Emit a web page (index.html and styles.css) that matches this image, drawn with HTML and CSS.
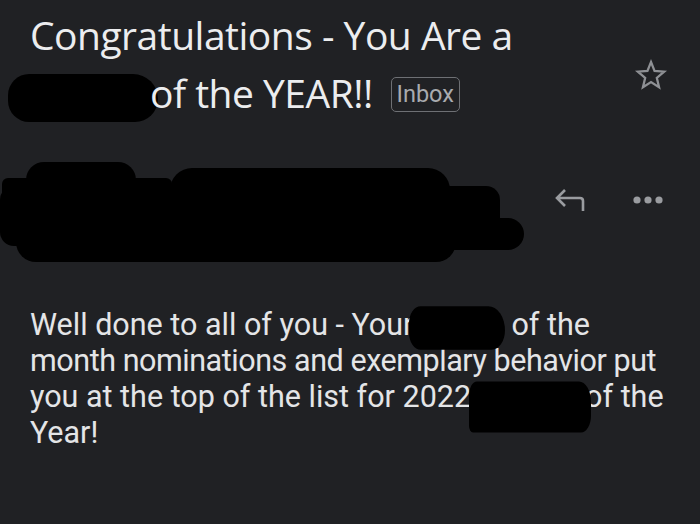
FILE: index.html
```html
<!DOCTYPE html>
<html>
<head>
<meta charset="utf-8">
<link rel="stylesheet" href="styles.css">
</head>
<body>
<div class="screen">
  <header class="subject-row">
    <h1 class="subject">Congratulations - You Are a<br><span class="redact r-title"></span>of the YEAR!! <span class="badge">Inbox</span></h1>
    <button class="icon-btn star" aria-label="Star">
      <svg width="34" height="34" viewBox="0 0 24 24"><path d="M12 2.8l2.5 6.3 6.8.5-5.2 4.4 1.6 6.6L12 17l-5.7 3.6 1.6-6.6-5.2-4.4 6.8-.5z" fill="none" stroke="#8e9094" stroke-width="1.6" stroke-linejoin="miter"/></svg>
    </button>
  </header>

  <section class="sender-row">
    <svg class="sender-redact" width="530" height="110" viewBox="0 0 530 110">
      <g fill="#000">
        <rect x="26" y="4" width="110" height="40" rx="18"/>
        <rect x="2" y="20" width="170" height="50" rx="6"/>
        <rect x="170" y="10" width="280" height="45" rx="22"/>
        <rect x="0" y="28" width="500" height="60" rx="14"/>
        <rect x="14" y="60" width="510" height="32" rx="16"/>
        <rect x="16" y="64" width="440" height="40" rx="20"/>
      </g>
    </svg>
    <div class="actions">
      <button class="icon-btn" aria-label="Reply">
        <svg width="34" height="28" viewBox="0 0 34 28"><path d="M30 25V15c0-2-1-3-3-3H5M12 4L4 12l8 8" fill="none" stroke="#9a9ca0" stroke-width="2.6" stroke-linecap="butt" stroke-linejoin="miter"/></svg>
      </button>
      <button class="icon-btn" aria-label="More">
        <svg width="30" height="10" viewBox="0 0 30 10"><circle cx="4" cy="5" r="3.6" fill="#9a9ca0"/><circle cx="15" cy="5" r="3.6" fill="#9a9ca0"/><circle cx="26" cy="5" r="3.6" fill="#9a9ca0"/></svg>
      </button>
    </div>
  </section>

  <article class="body-text">
    <p>Well done to all of you - Your<span class="redact r-b1"></span>of the<br><span class="tight">month nominations and exemplary behavior put</span><br>you at the top of the list for 2022<span class="redact r-b2"></span>of the<br>Year!</p>
  </article>
</div>
</body>
</html>
```

FILE: styles.css
```css
* { box-sizing: border-box; }
html, body { margin: 0; padding: 0; }
body {
  background: #202124;
  width: 700px;
  height: 524px;
  overflow: hidden;
  font-family: Roboto, "Liberation Sans", sans-serif;
  color: #e8eaed;
}
.screen {
  padding: 6px 30px 0 30px;
}
.subject-row {
  display: flex;
  align-items: flex-start;
  justify-content: space-between;
}
.subject {
  margin: 0;
  font-family: "Open Sans", Roboto, sans-serif;
  font-weight: 400;
  font-size: 39px;
  line-height: 58px;
  letter-spacing: -0.5px;
  color: #ecedef;
  white-space: nowrap;
}
.badge {
  display: inline-block;
  vertical-align: 6px;
  font-family: Roboto, sans-serif;
  font-size: 23.5px;
  line-height: 33px;
  letter-spacing: 0;
  padding: 0 5px;
  border: 1.5px solid #6e7074;
  border-radius: 5px;
  color: #a9abaf;
  margin-left: 8px;
}
.redact {
  display: inline-block;
  background: #000;
}
.r-title {
  width: 150px;
  height: 48px;
  border-radius: 22px 26px 24px 22px;
  margin-left: -22px;
  margin-right: -8px;
  vertical-align: -14px;
}
.icon-btn {
  background: none;
  border: 0;
  padding: 0;
  display: flex;
  align-items: center;
  justify-content: center;
}
.star {
  margin-top: 52px;
  margin-right: 2px;
}
.sender-row {
  display: flex;
  align-items: flex-start;
  justify-content: space-between;
  margin: 36px 0 0 -30px;
}
.sender-redact { display: block; }
.actions {
  display: flex;
  align-items: center;
  gap: 46px;
  margin-top: 28px;
  margin-right: 7px;
}
.body-text p {
  margin: 39px 0 0 0;
  font-size: 30.5px;
  line-height: 36px;
  color: #e4e5e7;
  letter-spacing: 0;
  white-space: nowrap;
}
.tight { letter-spacing: -0.45px; }
.r-b1 {
  width: 96px;
  height: 30px;
  vertical-align: middle;
  border-radius: 14px 20px 16px 14px;
  margin: 0 6px 0 -4px;
  transform: translateY(1px) scaleY(1.45);
}
.r-b2 {
  width: 122px;
  height: 30px;
  vertical-align: middle;
  border-radius: 8px 12px 10px 4px;
  margin: 0 -6px 0 -2px;
  transform: translateY(8px) scaleY(1.7);
}
```
